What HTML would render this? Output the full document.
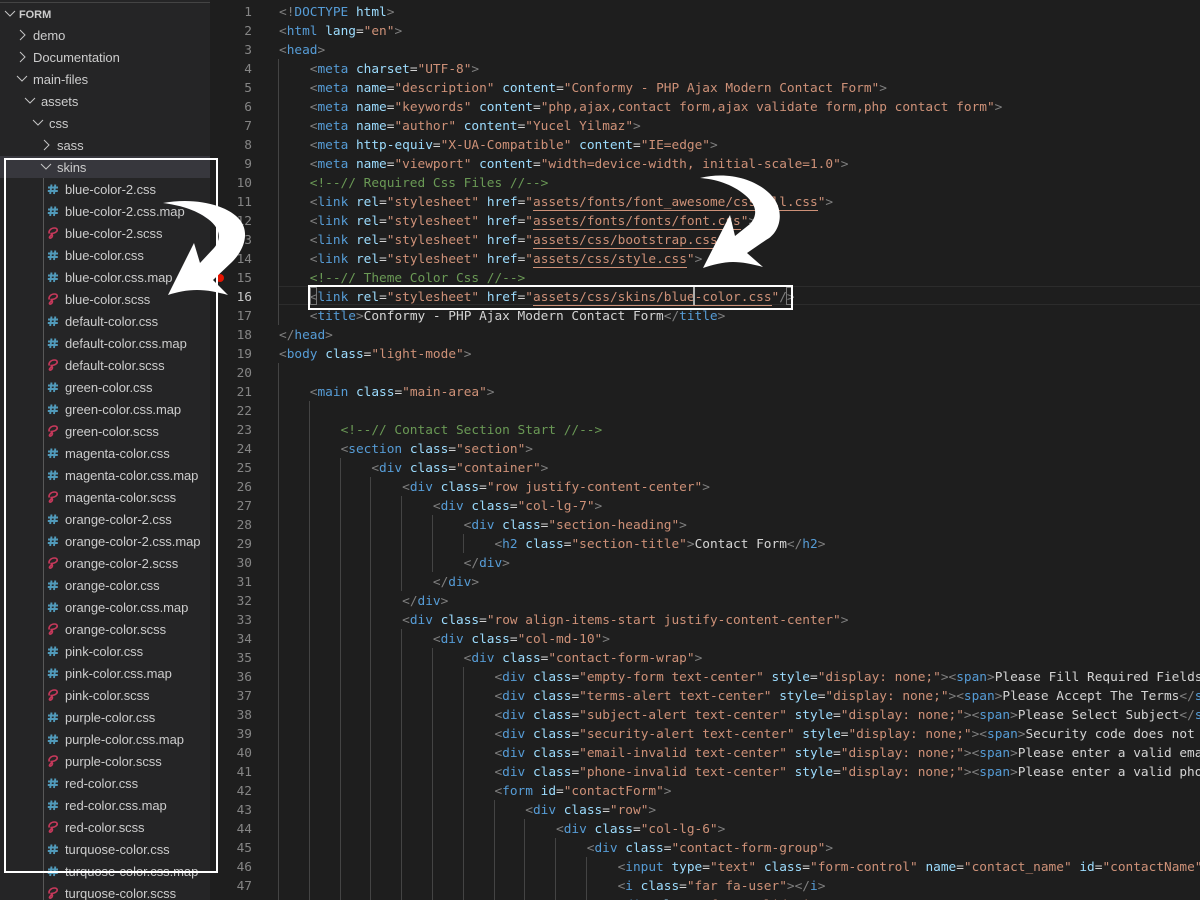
<!DOCTYPE html>
<html lang="en"><head><meta charset="utf-8"><title>VS Code skins</title>
<style>
html,body{margin:0;padding:0;background:#1e1e1e;width:1200px;height:900px;overflow:hidden}
#root{position:relative;width:1200px;height:900px;overflow:hidden;background:#1e1e1e}
#side{position:absolute;left:0;top:0;width:210px;height:900px;background:#252526;overflow:hidden;font:13px/22px "Liberation Sans",sans-serif;letter-spacing:-.05px;color:#cccccc}
#topline{position:absolute;left:0;top:2px;width:210px;height:1px;background:#444}
.r{position:absolute;height:22px;left:0;width:210px;white-space:nowrap}
.r span{position:absolute;top:1px}
.r svg{position:absolute;top:3px}
.sel{background:#37373d}
#guide{position:absolute;left:43px;top:178px;width:1px;height:722px;background:#585858}
.ln{position:absolute;left:210px;width:42px;text-align:right;font:12.8px/21px "DejaVu Sans Mono",monospace;color:#858585;height:19px}
.c{position:absolute;left:279px;height:19px;white-space:pre;font:12.8px/21px "DejaVu Sans Mono",monospace;letter-spacing:-.01px;color:#d4d4d4}
.c b{font-weight:normal;color:#808080}.c i{font-style:normal;color:#569cd6}.c u{text-decoration:none;color:#9cdcfe}.c em{font-style:normal;color:#ce9178}.c small{font-size:inherit;color:#6a9955}
.c em.l{border-bottom:1px solid #ce9178}
.g{position:absolute;width:1px;background:#444}
.ov{position:absolute;border:2px solid #fff;box-sizing:border-box}
</style></head><body><div id="root">
<svg width="0" height="0" style="position:absolute"><defs>
<g id="ch"><path d="M3 5l5 5 5-5" fill="none" stroke="#c5c5c5" stroke-width="1"/></g>
<g id="cr"><path d="M5 3l5 5-5 5" fill="none" stroke="#c5c5c5" stroke-width="1"/></g>
<g id="h"><path d="M6.500 3.500l-1.300 9.500M10.300 3.500L9 13M3 6.500h10M2.800 10h10" fill="none" stroke="#519aba" stroke-width="1.900"/></g>
<g id="s"><path d="M4.500 8.500C3 6.500 5.500 3 9.500 3c3 0 3.500 2.500 1.500 4C9 8.500 6.500 8.500 5.500 8.500c2 .5 2.500 2 1.500 3.500-.6 1-2 1.500-2.500.8C4 12 6 10 7.500 9.500" fill="none" stroke="#c6395b" stroke-width="1.600"/></g>
</defs></svg>
<div id="side">
<div id="topline"></div>
<div class="r" style="top:3px"><svg width="16" height="16" style="left:2px"><use href="#ch"/></svg><span style="left:19px;font-size:11px;font-weight:bold">FORM</span></div>
<div class="r" style="top:24px"><svg width="16" height="16" style="left:15px"><use href="#cr"/></svg><span style="left:33px">demo</span></div>
<div class="r" style="top:46px"><svg width="16" height="16" style="left:15px"><use href="#cr"/></svg><span style="left:33px">Documentation</span></div>
<div class="r" style="top:68px"><svg width="16" height="16" style="left:14px"><use href="#ch"/></svg><span style="left:33px">main-files</span></div>
<div class="r" style="top:90px"><svg width="16" height="16" style="left:22px"><use href="#ch"/></svg><span style="left:41px">assets</span></div>
<div class="r" style="top:112px"><svg width="16" height="16" style="left:30px"><use href="#ch"/></svg><span style="left:49px">css</span></div>
<div class="r" style="top:134px"><svg width="16" height="16" style="left:39px"><use href="#cr"/></svg><span style="left:57px">sass</span></div>
<div class="r sel" style="top:156px"><svg width="16" height="16" style="left:38px"><use href="#ch"/></svg><span style="left:57px">skins</span></div>
<div id="guide"></div>
<div class="r" style="top:178px"><svg width="16" height="16" style="left:45px"><use href="#h"/></svg><span style="left:65px">blue-color-2.css</span></div>
<div class="r" style="top:200px"><svg width="16" height="16" style="left:45px"><use href="#h"/></svg><span style="left:65px">blue-color-2.css.map</span></div>
<div class="r" style="top:222px"><svg width="16" height="16" style="left:45px"><use href="#s"/></svg><span style="left:65px">blue-color-2.scss</span></div>
<div class="r" style="top:244px"><svg width="16" height="16" style="left:45px"><use href="#h"/></svg><span style="left:65px">blue-color.css</span></div>
<div class="r" style="top:266px"><svg width="16" height="16" style="left:45px"><use href="#h"/></svg><span style="left:65px">blue-color.css.map</span></div>
<div class="r" style="top:288px"><svg width="16" height="16" style="left:45px"><use href="#s"/></svg><span style="left:65px">blue-color.scss</span></div>
<div class="r" style="top:310px"><svg width="16" height="16" style="left:45px"><use href="#h"/></svg><span style="left:65px">default-color.css</span></div>
<div class="r" style="top:332px"><svg width="16" height="16" style="left:45px"><use href="#h"/></svg><span style="left:65px">default-color.css.map</span></div>
<div class="r" style="top:354px"><svg width="16" height="16" style="left:45px"><use href="#s"/></svg><span style="left:65px">default-color.scss</span></div>
<div class="r" style="top:376px"><svg width="16" height="16" style="left:45px"><use href="#h"/></svg><span style="left:65px">green-color.css</span></div>
<div class="r" style="top:398px"><svg width="16" height="16" style="left:45px"><use href="#h"/></svg><span style="left:65px">green-color.css.map</span></div>
<div class="r" style="top:420px"><svg width="16" height="16" style="left:45px"><use href="#s"/></svg><span style="left:65px">green-color.scss</span></div>
<div class="r" style="top:442px"><svg width="16" height="16" style="left:45px"><use href="#h"/></svg><span style="left:65px">magenta-color.css</span></div>
<div class="r" style="top:464px"><svg width="16" height="16" style="left:45px"><use href="#h"/></svg><span style="left:65px">magenta-color.css.map</span></div>
<div class="r" style="top:486px"><svg width="16" height="16" style="left:45px"><use href="#s"/></svg><span style="left:65px">magenta-color.scss</span></div>
<div class="r" style="top:508px"><svg width="16" height="16" style="left:45px"><use href="#h"/></svg><span style="left:65px">orange-color-2.css</span></div>
<div class="r" style="top:530px"><svg width="16" height="16" style="left:45px"><use href="#h"/></svg><span style="left:65px">orange-color-2.css.map</span></div>
<div class="r" style="top:552px"><svg width="16" height="16" style="left:45px"><use href="#s"/></svg><span style="left:65px">orange-color-2.scss</span></div>
<div class="r" style="top:574px"><svg width="16" height="16" style="left:45px"><use href="#h"/></svg><span style="left:65px">orange-color.css</span></div>
<div class="r" style="top:596px"><svg width="16" height="16" style="left:45px"><use href="#h"/></svg><span style="left:65px">orange-color.css.map</span></div>
<div class="r" style="top:618px"><svg width="16" height="16" style="left:45px"><use href="#s"/></svg><span style="left:65px">orange-color.scss</span></div>
<div class="r" style="top:640px"><svg width="16" height="16" style="left:45px"><use href="#h"/></svg><span style="left:65px">pink-color.css</span></div>
<div class="r" style="top:662px"><svg width="16" height="16" style="left:45px"><use href="#h"/></svg><span style="left:65px">pink-color.css.map</span></div>
<div class="r" style="top:684px"><svg width="16" height="16" style="left:45px"><use href="#s"/></svg><span style="left:65px">pink-color.scss</span></div>
<div class="r" style="top:706px"><svg width="16" height="16" style="left:45px"><use href="#h"/></svg><span style="left:65px">purple-color.css</span></div>
<div class="r" style="top:728px"><svg width="16" height="16" style="left:45px"><use href="#h"/></svg><span style="left:65px">purple-color.css.map</span></div>
<div class="r" style="top:750px"><svg width="16" height="16" style="left:45px"><use href="#s"/></svg><span style="left:65px">purple-color.scss</span></div>
<div class="r" style="top:772px"><svg width="16" height="16" style="left:45px"><use href="#h"/></svg><span style="left:65px">red-color.css</span></div>
<div class="r" style="top:794px"><svg width="16" height="16" style="left:45px"><use href="#h"/></svg><span style="left:65px">red-color.css.map</span></div>
<div class="r" style="top:816px"><svg width="16" height="16" style="left:45px"><use href="#s"/></svg><span style="left:65px">red-color.scss</span></div>
<div class="r" style="top:838px"><svg width="16" height="16" style="left:45px"><use href="#h"/></svg><span style="left:65px">turquose-color.css</span></div>
<div class="r" style="top:860px"><svg width="16" height="16" style="left:45px"><use href="#h"/></svg><span style="left:65px">turquose-color.css.map</span></div>
<div class="r" style="top:882px"><svg width="16" height="16" style="left:45px"><use href="#s"/></svg><span style="left:65px">turquose-color.scss</span></div>
</div>

<!-- current line -->
<div style="position:absolute;left:279px;top:286px;width:921px;height:19px;border-top:1px solid #2c2c2c;border-bottom:1px solid #2c2c2c;box-sizing:border-box"></div>

<!-- guides -->
<div class="g" style="left:278px;top:59px;height:266px"></div>
<div class="g" style="left:278px;top:363px;height:537px"></div>
<div class="g" style="left:309px;top:401px;height:499px"></div>
<div class="g" style="left:340px;top:458px;height:442px"></div>
<div class="g" style="left:370px;top:477px;height:423px"></div>
<div class="g" style="left:401px;top:496px;height:95px"></div>
<div class="g" style="left:401px;top:629px;height:271px"></div>
<div class="g" style="left:432px;top:515px;height:57px"></div>
<div class="g" style="left:432px;top:648px;height:252px"></div>
<div class="g" style="left:463px;top:534px;height:19px"></div>
<div class="g" style="left:463px;top:667px;height:233px"></div>
<div class="g" style="left:494px;top:800px;height:100px"></div>
<div class="g" style="left:524px;top:819px;height:81px"></div>
<div class="g" style="left:555px;top:838px;height:62px"></div>
<div class="g" style="left:586px;top:857px;height:43px"></div>

<!-- line numbers -->
<div class="ln" style="top:2px">1</div><div class="ln" style="top:21px">2</div><div class="ln" style="top:40px">3</div><div class="ln" style="top:59px">4</div><div class="ln" style="top:78px">5</div><div class="ln" style="top:97px">6</div><div class="ln" style="top:116px">7</div><div class="ln" style="top:135px">8</div><div class="ln" style="top:154px">9</div><div class="ln" style="top:173px">10</div><div class="ln" style="top:192px">11</div><div class="ln" style="top:211px">12</div><div class="ln" style="top:230px">13</div><div class="ln" style="top:249px">14</div><div class="ln" style="top:268px">15</div><div class="ln" style="top:287px;color:#c6c6c6">16</div><div class="ln" style="top:306px">17</div><div class="ln" style="top:325px">18</div><div class="ln" style="top:344px">19</div><div class="ln" style="top:363px">20</div><div class="ln" style="top:382px">21</div><div class="ln" style="top:401px">22</div><div class="ln" style="top:420px">23</div><div class="ln" style="top:439px">24</div><div class="ln" style="top:458px">25</div><div class="ln" style="top:477px">26</div><div class="ln" style="top:496px">27</div><div class="ln" style="top:515px">28</div><div class="ln" style="top:534px">29</div><div class="ln" style="top:553px">30</div><div class="ln" style="top:572px">31</div><div class="ln" style="top:591px">32</div><div class="ln" style="top:610px">33</div><div class="ln" style="top:629px">34</div><div class="ln" style="top:648px">35</div><div class="ln" style="top:667px">36</div><div class="ln" style="top:686px">37</div><div class="ln" style="top:705px">38</div><div class="ln" style="top:724px">39</div><div class="ln" style="top:743px">40</div><div class="ln" style="top:762px">41</div><div class="ln" style="top:781px">42</div><div class="ln" style="top:800px">43</div><div class="ln" style="top:819px">44</div><div class="ln" style="top:838px">45</div><div class="ln" style="top:857px">46</div><div class="ln" style="top:876px">47</div><div class="ln" style="top:895px">48</div>

<!-- code -->
<div class="c" style="top:2px"><b>&lt;!</b><i>DOCTYPE</i> <u>html</u><b>&gt;</b></div>
<div class="c" style="top:21px"><b>&lt;</b><i>html</i> <u>lang</u>=<em>"en"</em><b>&gt;</b></div>
<div class="c" style="top:40px"><b>&lt;</b><i>head</i><b>&gt;</b></div>
<div class="c" style="top:59px">    <b>&lt;</b><i>meta</i> <u>charset</u>=<em>"UTF-8"</em><b>&gt;</b></div>
<div class="c" style="top:78px">    <b>&lt;</b><i>meta</i> <u>name</u>=<em>"description"</em> <u>content</u>=<em>"Conformy - PHP Ajax Modern Contact Form"</em><b>&gt;</b></div>
<div class="c" style="top:97px">    <b>&lt;</b><i>meta</i> <u>name</u>=<em>"keywords"</em> <u>content</u>=<em>"php,ajax,contact form,ajax validate form,php contact form"</em><b>&gt;</b></div>
<div class="c" style="top:116px">    <b>&lt;</b><i>meta</i> <u>name</u>=<em>"author"</em> <u>content</u>=<em>"Yucel Yilmaz"</em><b>&gt;</b></div>
<div class="c" style="top:135px">    <b>&lt;</b><i>meta</i> <u>http-equiv</u>=<em>"X-UA-Compatible"</em> <u>content</u>=<em>"IE=edge"</em><b>&gt;</b></div>
<div class="c" style="top:154px">    <b>&lt;</b><i>meta</i> <u>name</u>=<em>"viewport"</em> <u>content</u>=<em>"width=device-width, initial-scale=1.0"</em><b>&gt;</b></div>
<div class="c" style="top:173px">    <small>&lt;!--// Required Css Files //--&gt;</small></div>
<div class="c" style="top:192px">    <b>&lt;</b><i>link</i> <u>rel</u>=<em>"stylesheet"</em> <u>href</u>=<em>"<em class="l">assets/fonts/font_awesome/css/all.css</em>"</em><b>&gt;</b></div>
<div class="c" style="top:211px">    <b>&lt;</b><i>link</i> <u>rel</u>=<em>"stylesheet"</em> <u>href</u>=<em>"<em class="l">assets/fonts/fonts/font.css</em>"</em><b>&gt;</b></div>
<div class="c" style="top:230px">    <b>&lt;</b><i>link</i> <u>rel</u>=<em>"stylesheet"</em> <u>href</u>=<em>"<em class="l">assets/css/bootstrap.css</em>"</em><b>&gt;</b></div>
<div class="c" style="top:249px">    <b>&lt;</b><i>link</i> <u>rel</u>=<em>"stylesheet"</em> <u>href</u>=<em>"<em class="l">assets/css/style.css</em>"</em><b>&gt;</b></div>
<div class="c" style="top:268px">    <small>&lt;!--// Theme Color Css //--&gt;</small></div>
<div class="c" style="top:287px">    <b>&lt;</b><i>link</i> <u>rel</u>=<em>"stylesheet"</em> <u>href</u>=<em>"<em class="l">assets/css/skins/blue-color.css</em>"</em><b>/&gt;</b></div>
<div class="c" style="top:306px">    <b>&lt;</b><i>title</i><b>&gt;</b>Conformy - PHP Ajax Modern Contact Form<b>&lt;/</b><i>title</i><b>&gt;</b></div>
<div class="c" style="top:325px"><b>&lt;/</b><i>head</i><b>&gt;</b></div>
<div class="c" style="top:344px"><b>&lt;</b><i>body</i> <u>class</u>=<em>"light-mode"</em><b>&gt;</b></div>
<div class="c" style="top:382px">    <b>&lt;</b><i>main</i> <u>class</u>=<em>"main-area"</em><b>&gt;</b></div>
<div class="c" style="top:420px">        <small>&lt;!--// Contact Section Start //--&gt;</small></div>
<div class="c" style="top:439px">        <b>&lt;</b><i>section</i> <u>class</u>=<em>"section"</em><b>&gt;</b></div>
<div class="c" style="top:458px">            <b>&lt;</b><i>div</i> <u>class</u>=<em>"container"</em><b>&gt;</b></div>
<div class="c" style="top:477px">                <b>&lt;</b><i>div</i> <u>class</u>=<em>"row justify-content-center"</em><b>&gt;</b></div>
<div class="c" style="top:496px">                    <b>&lt;</b><i>div</i> <u>class</u>=<em>"col-lg-7"</em><b>&gt;</b></div>
<div class="c" style="top:515px">                        <b>&lt;</b><i>div</i> <u>class</u>=<em>"section-heading"</em><b>&gt;</b></div>
<div class="c" style="top:534px">                            <b>&lt;</b><i>h2</i> <u>class</u>=<em>"section-title"</em><b>&gt;</b>Contact Form<b>&lt;/</b><i>h2</i><b>&gt;</b></div>
<div class="c" style="top:553px">                        <b>&lt;/</b><i>div</i><b>&gt;</b></div>
<div class="c" style="top:572px">                    <b>&lt;/</b><i>div</i><b>&gt;</b></div>
<div class="c" style="top:591px">                <b>&lt;/</b><i>div</i><b>&gt;</b></div>
<div class="c" style="top:610px">                <b>&lt;</b><i>div</i> <u>class</u>=<em>"row align-items-start justify-content-center"</em><b>&gt;</b></div>
<div class="c" style="top:629px">                    <b>&lt;</b><i>div</i> <u>class</u>=<em>"col-md-10"</em><b>&gt;</b></div>
<div class="c" style="top:648px">                        <b>&lt;</b><i>div</i> <u>class</u>=<em>"contact-form-wrap"</em><b>&gt;</b></div>
<div class="c" style="top:667px">                            <b>&lt;</b><i>div</i> <u>class</u>=<em>"empty-form text-center"</em> <u>style</u>=<em>"display: none;"</em><b>&gt;&lt;</b><i>span</i><b>&gt;</b>Please Fill Required Fields<b>&lt;/</b><i>span</i><b>&gt;</b></div>
<div class="c" style="top:686px">                            <b>&lt;</b><i>div</i> <u>class</u>=<em>"terms-alert text-center"</em> <u>style</u>=<em>"display: none;"</em><b>&gt;&lt;</b><i>span</i><b>&gt;</b>Please Accept The Terms<b>&lt;/</b><i>span</i><b>&gt;</b></div>
<div class="c" style="top:705px">                            <b>&lt;</b><i>div</i> <u>class</u>=<em>"subject-alert text-center"</em> <u>style</u>=<em>"display: none;"</em><b>&gt;&lt;</b><i>span</i><b>&gt;</b>Please Select Subject<b>&lt;/</b><i>span</i><b>&gt;</b></div>
<div class="c" style="top:724px">                            <b>&lt;</b><i>div</i> <u>class</u>=<em>"security-alert text-center"</em> <u>style</u>=<em>"display: none;"</em><b>&gt;&lt;</b><i>span</i><b>&gt;</b>Security code does not match</div>
<div class="c" style="top:743px">                            <b>&lt;</b><i>div</i> <u>class</u>=<em>"email-invalid text-center"</em> <u>style</u>=<em>"display: none;"</em><b>&gt;&lt;</b><i>span</i><b>&gt;</b>Please enter a valid email</div>
<div class="c" style="top:762px">                            <b>&lt;</b><i>div</i> <u>class</u>=<em>"phone-invalid text-center"</em> <u>style</u>=<em>"display: none;"</em><b>&gt;&lt;</b><i>span</i><b>&gt;</b>Please enter a valid phone</div>
<div class="c" style="top:781px">                            <b>&lt;</b><i>form</i> <u>id</u>=<em>"contactForm"</em><b>&gt;</b></div>
<div class="c" style="top:800px">                                <b>&lt;</b><i>div</i> <u>class</u>=<em>"row"</em><b>&gt;</b></div>
<div class="c" style="top:819px">                                    <b>&lt;</b><i>div</i> <u>class</u>=<em>"col-lg-6"</em><b>&gt;</b></div>
<div class="c" style="top:838px">                                        <b>&lt;</b><i>div</i> <u>class</u>=<em>"contact-form-group"</em><b>&gt;</b></div>
<div class="c" style="top:857px">                                            <b>&lt;</b><i>input</i> <u>type</u>=<em>"text"</em> <u>class</u>=<em>"form-control"</em> <u>name</u>=<em>"contact_name"</em> <u>id</u>=<em>"contactName"</em></div>
<div class="c" style="top:876px">                                            <b>&lt;</b><i>i</i> <u>class</u>=<em>"far fa-user"</em><b>&gt;&lt;/</b><i>i</i><b>&gt;</b></div>
<div class="c" style="top:895px">                                            <b>&lt;</b><i>div</i> <u>class</u>=<em>"form-validation"</em><b>&gt;</b></div>

<!-- cursor and bracket match -->
<div style="position:absolute;left:693px;top:287px;width:2px;height:18px;background:#aeafad"></div>
<div style="position:absolute;left:310px;top:287px;width:7px;height:18px;border:1px solid #777;box-sizing:border-box"></div>
<div style="position:absolute;left:786px;top:287px;width:7px;height:18px;border:1px solid #777;box-sizing:border-box"></div>

<!-- breakpoint dot -->
<div style="position:absolute;left:216px;top:274px;width:8px;height:8px;border-radius:50%;background:#e51400"></div>

<!-- annotation overlay -->
<div class="ov" style="left:4px;top:158px;width:214px;height:715px"></div>
<div class="ov" style="left:308px;top:285px;width:485px;height:25px"></div>
<svg width="1200" height="900" style="position:absolute;left:0;top:0">
<path d="M163 203C195 197 228 205 240 220C250 233 244 250 232 262L213 280L228 295C217 292 207 290 197 290C187 290 177 292 168 295L194 243L200 263L214 248C222 238 220 228 208 219C195 209 178 205 163 203Z" fill="#fff"/>
<path d="M700 178C732 170 763 182 775 200C785 216 778 234 766 240L747 253L763 267C752 264 742 262 733 262C723 262 712 265 703 268L730 215L735 236L750 224C758 215 757 205 745 195C732 184 715 179 700 178Z" fill="#fff"/>
</svg>
</div></body></html>
